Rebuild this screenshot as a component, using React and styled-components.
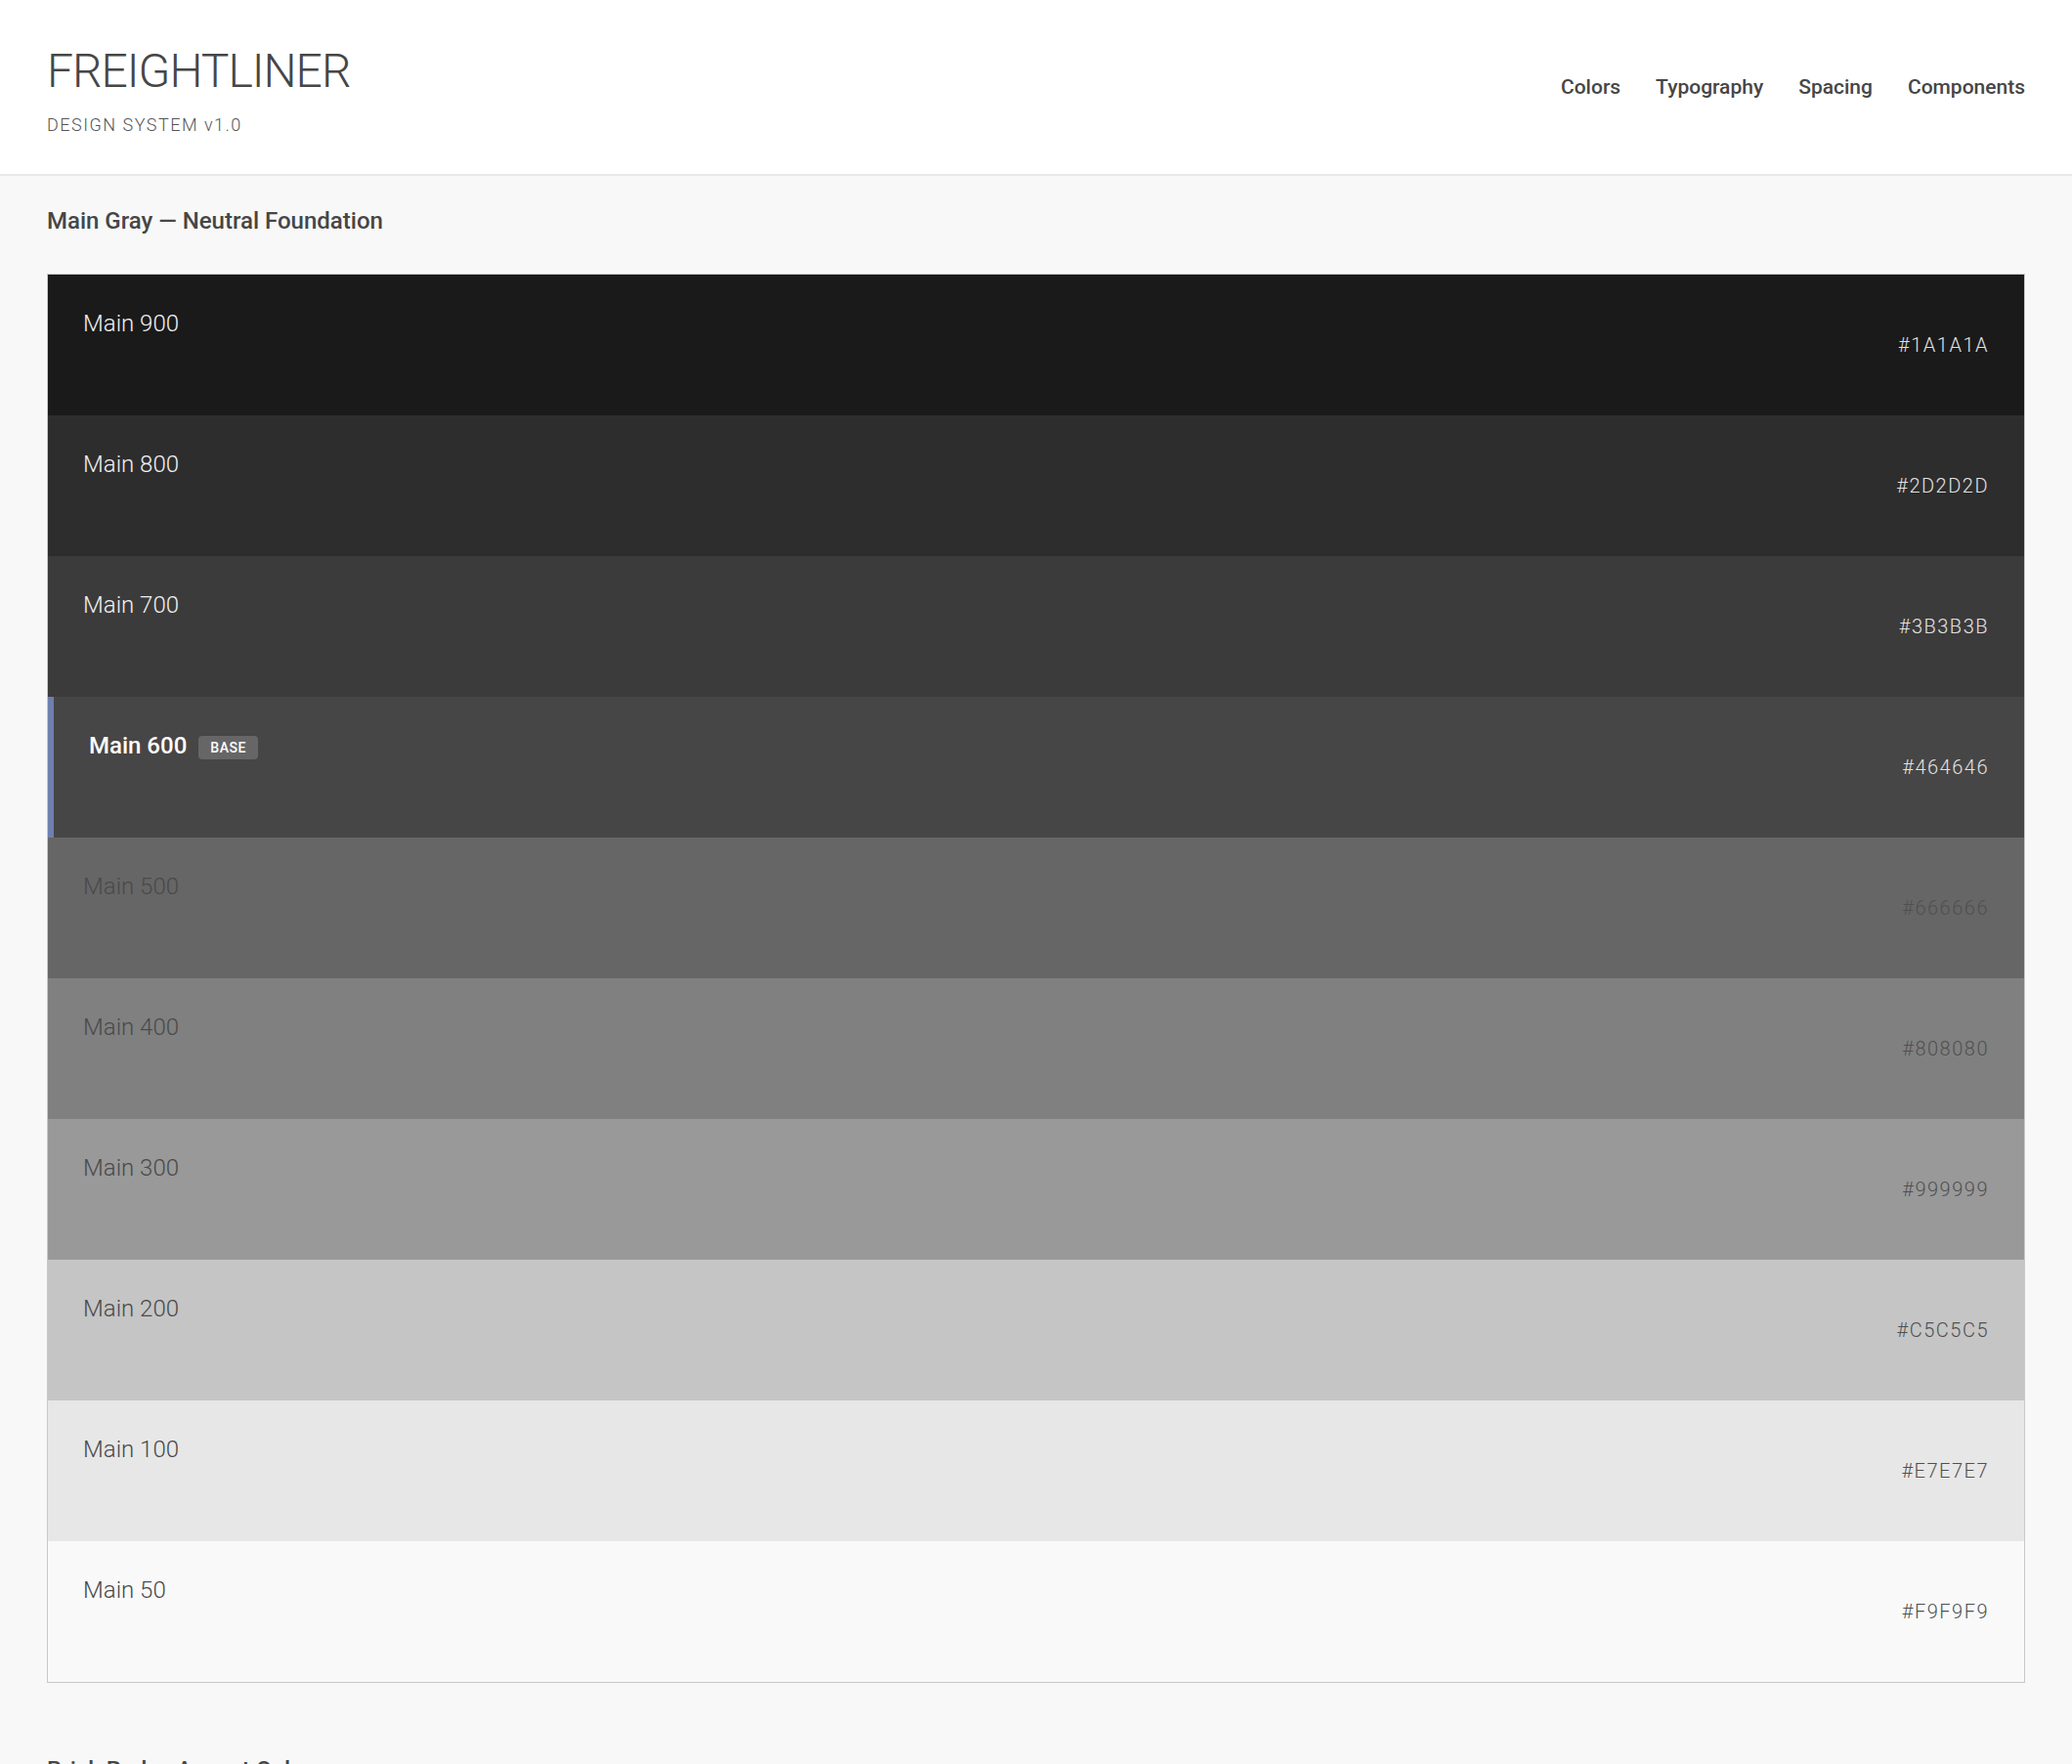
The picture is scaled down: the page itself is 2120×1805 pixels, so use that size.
import React from 'react';
import styled, { createGlobalStyle } from 'styled-components';

const GlobalStyle = createGlobalStyle`
  body {
    margin: 0;
    background: #f8f8f8;
    font-family: Roboto, "Liberation Sans", sans-serif;
    color: #464646;
  }
`;

const Header = styled.header`
  display: flex;
  justify-content: space-between;
  align-items: center;
  padding: 44px 48px 40px;
  background: #fff;
  border-bottom: 2px solid #e8e8e8;
`;

const Brand = styled.div`
  display: flex;
  flex-direction: column;
`;

const Title = styled.h1`
  margin: 0 0 16px;
  font-size: 48px;
  font-weight: 300;
  letter-spacing: -1px;
  line-height: normal;
  color: #464646;
`;

const Subtitle = styled.div`
  font-size: 18px;
  font-weight: 300;
  letter-spacing: 1.5px;
  color: #555;
`;

const Nav = styled.nav`
  display: flex;
  gap: 36px;
  padding-bottom: 5px;
`;

const NavLink = styled.a`
  font-size: 21px;
  font-weight: 500;
  color: #464646;
  text-decoration: none;
`;

const Main = styled.main`
  padding: 32px 48px;
`;

const Section = styled.section`
  margin-bottom: 75px;
`;

const SectionTitle = styled.h2`
  margin: 0 0 40px;
  font-size: 24px;
  font-weight: 500;
  line-height: normal;
  color: #464646;
`;

const Palette = styled.div`
  border: 1px solid #c8c8c8;
`;

const Swatch = styled.div`
  display: flex;
  justify-content: space-between;
  box-sizing: border-box;
  height: 144px;
  padding: 36px;
  background: ${p => p.$bg};
  border-left: ${p => (p.$base ? '6px solid #6f7fae' : 'none')};
`;

const SwatchName = styled.div`
  display: flex;
  align-items: center;
  align-self: flex-start;
  gap: 12px;
  font-size: 24px;
  font-weight: ${p => (p.$base ? 500 : 300)};
  color: ${p => (p.$dark ? (p.$base ? '#fff' : '#f0f0f0') : '#4a4a4a')};
`;

const Badge = styled.span`
  margin-top: 4px;
  padding: 4px 12px;
  border-radius: 4px;
  background: #666;
  color: #fff;
  font-size: 14px;
  font-weight: 500;
  letter-spacing: 0.5px;
  line-height: 16px;
`;

const Hex = styled.div`
  align-self: center;
  font-size: 20px;
  font-weight: 300;
  letter-spacing: 1.5px;
  color: ${p => (p.$dark ? '#e2e2e2' : '#505050')};
`;

const grays = [
  { name: 'Main 900', hex: '#1A1A1A', dark: true },
  { name: 'Main 800', hex: '#2D2D2D', dark: true },
  { name: 'Main 700', hex: '#3B3B3B', dark: true },
  { name: 'Main 600', hex: '#464646', dark: true, base: true },
  { name: 'Main 500', hex: '#666666' },
  { name: 'Main 400', hex: '#808080' },
  { name: 'Main 300', hex: '#999999' },
  { name: 'Main 200', hex: '#C5C5C5' },
  { name: 'Main 100', hex: '#E7E7E7' },
  { name: 'Main 50', hex: '#F9F9F9' },
];

const reds = [
  { name: 'Brick 900', hex: '#4A1410', dark: true },
  { name: 'Brick 800', hex: '#6B1E17', dark: true },
  { name: 'Brick 700', hex: '#8A281F', dark: true },
  { name: 'Brick 600', hex: '#A63A2C', dark: true, base: true },
  { name: 'Brick 500', hex: '#C25445' },
  { name: 'Brick 400', hex: '#D47A6D' },
];

const Swatches = ({ colors }) => (
  <Palette>
    {colors.map(c => (
      <Swatch key={c.hex} $bg={c.hex} $base={c.base}>
        <SwatchName $dark={c.dark} $base={c.base}>
          {c.name}
          {c.base && <Badge>BASE</Badge>}
        </SwatchName>
        <Hex $dark={c.dark}>{c.hex}</Hex>
      </Swatch>
    ))}
  </Palette>
);

const App = () => (
  <>
    <GlobalStyle />
    <Header>
      <Brand>
        <Title>FREIGHTLINER</Title>
        <Subtitle>DESIGN SYSTEM v1.0</Subtitle>
      </Brand>
      <Nav>
        <NavLink href="#colors">Colors</NavLink>
        <NavLink href="#typography">Typography</NavLink>
        <NavLink href="#spacing">Spacing</NavLink>
        <NavLink href="#components">Components</NavLink>
      </Nav>
    </Header>
    <Main>
      <Section>
        <SectionTitle>Main Gray — Neutral Foundation</SectionTitle>
        <Swatches colors={grays} />
      </Section>
      <Section>
        <SectionTitle>Brick Red — Accent Color</SectionTitle>
        <Swatches colors={reds} />
      </Section>
    </Main>
  </>
);

export default App;
